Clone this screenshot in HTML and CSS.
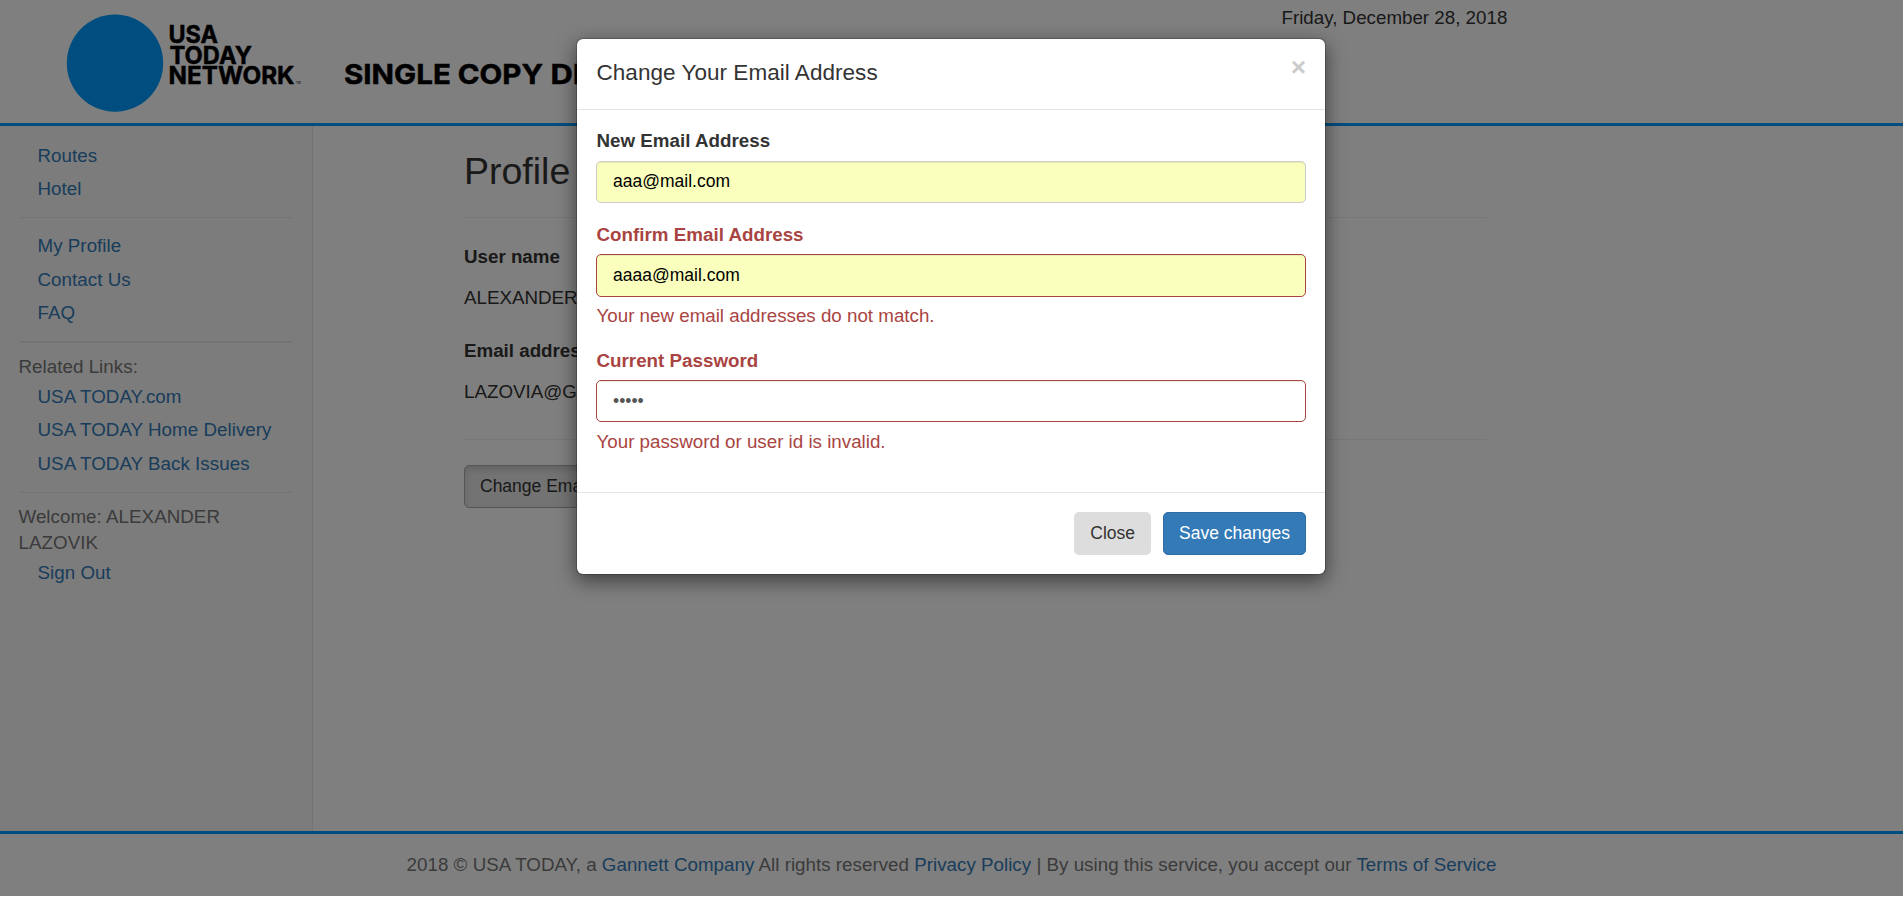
FILE: index.html
```html
<!DOCTYPE html>
<html lang="en">
<head>
<meta charset="utf-8">
<title>Profile</title>
<link rel="stylesheet" href="styles.css">
</head>
<body>
<div class="page">
  <header class="header">
    <svg class="logo" width="800" height="123" viewBox="0 0 800 123" role="img" aria-label="USA TODAY NETWORK">
      <ellipse cx="115" cy="63.2" rx="48.2" ry="48.6" fill="#009bff"/>
      <g class="logo-text">
        <text x="168.500" y="42.500" font-size="24" textLength="49.500" lengthAdjust="spacingAndGlyphs">USA</text>
        <text x="169.500" y="63.500" font-size="24" textLength="82.500" lengthAdjust="spacingAndGlyphs">TODAY</text>
        <text x="168.500" y="84" font-size="24" textLength="126" lengthAdjust="spacingAndGlyphs">NETWORK</text>
        <text class="mark" x="296" y="83.500" font-size="3">TM</text>
        <text x="344" y="83.500" font-size="27.500" textLength="199" lengthAdjust="spacingAndGlyphs">SINGLE COPY</text>
        <text x="550.500" y="83.500" font-size="27.500" textLength="220" lengthAdjust="spacingAndGlyphs">DISTRIBUTION</text>
      </g>
    </svg>
    <div class="date">Friday, December 28, 2018</div>
  </header>
  <div class="columns">
    <nav class="sidebar">
      <ul class="links links-top"><li><a>Routes</a></li><li><a>Hotel</a></li></ul>
      <hr class="rule">
      <ul class="links"><li><a>My Profile</a></li><li><a>Contact Us</a></li><li><a>FAQ</a></li></ul>
      <hr class="rule rule-thick">
      <p class="note">Related Links:</p>
      <ul class="links"><li><a>USA TODAY.com</a></li><li><a>USA TODAY Home Delivery</a></li><li><a>USA TODAY Back Issues</a></li></ul>
      <hr class="rule rule-last">
      <p class="note">Welcome: ALEXANDER LAZOVIK</p>
      <ul class="links"><li><a>Sign Out</a></li></ul>
    </nav>
    <main class="main">
      <h2 class="title">Profile</h2>
      <hr class="rule">
      <dl class="details">
        <dt>User name</dt><dd>ALEXANDER LAZOVIK</dd>
        <dt>Email address</dt><dd>LAZOVIA@GMAIL.COM</dd>
      </dl>
      <hr class="rule">
      <button class="btn btn-active">Change Email Address</button>
    </main>
  </div>
  <footer class="footer">2018 © USA TODAY, a <a>Gannett Company</a> All rights reserved <a>Privacy Policy</a> | By using this service, you accept our <a>Terms of Service</a></footer>
</div>
<div class="backdrop"></div>
<div class="modal" role="dialog">
  <div class="modal-header"><h4 class="modal-title">Change Your Email Address</h4><span class="close">×</span></div>
  <div class="modal-body">
    <div class="group">
      <label class="label">New Email Address</label>
      <input class="input filled" type="text" value="aaa@mail.com">
    </div>
    <div class="group error">
      <label class="label label-tight">Confirm Email Address</label>
      <input class="input input-tall filled" type="text" value="aaaa@mail.com">
      <p class="message">Your new email addresses do not match.</p>
    </div>
    <div class="group error">
      <label class="label label-tight">Current Password</label>
      <input class="input input-password" type="password" value="aaaaa">
      <p class="message message-last">Your password or user id is invalid.</p>
    </div>
  </div>
  <div class="modal-footer"><button class="btn btn-close">Close</button><button class="btn btn-primary">Save changes</button></div>
</div>
</body>
</html>
```
FILE: styles.css
```css
* { box-sizing: border-box; }
html, body { height: 100%; }
body {
  margin: 0;
  overflow: hidden;
  background: #fff;
  color: #333;
  font: 18.75px/26px "Liberation Sans", Arial, sans-serif;
}
a { color: #337ab7; }
p, ul, dl, dd, h2, h4 { margin: 0; padding: 0; }
ul { list-style: none; }

.page { height: 896px; display: flex; flex-direction: column; }
.header {
  height: 126px;
  display: flex;
  border-bottom: 3px solid #009bff;
}
.logo { flex: none; display: block; }
.logo-text { font-family: Inter, sans-serif; font-weight: 700; fill: #000; stroke: #000; stroke-width: .5; }
.mark { stroke: none; opacity: .6; }
.date { margin-left: 481.5px; padding-top: 5px; white-space: nowrap; }

.columns { flex: 1; display: flex; }
.sidebar {
  width: 313px;
  padding: 13px 19px 0 18.5px;
  background: #f8f8f8;
  border-right: 1px solid #e7e7e7;
}
.links { padding-left: 19px; letter-spacing: .04px; }
.links li { height: 33.5px; padding-top: 4px; }
.links-top li { height: 33px; }
.rule { margin: 0; border: 0; height: 1px; background: #eee; }
.sidebar .rule { background: #e9e9e9; margin: 11px 0; }
.sidebar .links-top + .rule { margin-top: 12px; }
.sidebar .rule-thick { height: 2px; margin-top: 11px; }
.sidebar .rule-last { margin-top: 11.5px; }
.note { color: #777; letter-spacing: .04px; }

.main { width: 1023px; margin-left: 151px; }
.title { padding-top: 25px; height: 91px; font-size: 37.5px; line-height: 41px; font-weight: normal; }
.details { height: 221px; padding-top: 26px; }
.details dt { font-weight: bold; height: 41px; }
.details dd { height: 53px; }
.btn {
  height: 43px;
  padding: 0 15px;
  border: 1px solid transparent;
  border-radius: 5px;
  font: 17.5px/25px "Liberation Sans", Arial, sans-serif;
  color: #333;
}
.btn-active {
  margin-top: 25px;
  background: #e6e6e6;
  border-color: #adadad;
  box-shadow: inset 0 4px 6px rgba(0, 0, 0, .125);
}

.footer {
  height: 65px;
  padding-top: 18px;
  border-top: 3px solid #009bff;
  color: #777;
  text-align: center;
  letter-spacing: .02px;
}

.backdrop { position: absolute; top: 0; left: 0; width: 100%; height: 896px; background: rgba(0, 0, 0, .5); }

.modal {
  position: absolute;
  top: 38px;
  left: 576px;
  width: 750px;
  height: 537px;
  background: #fff;
  background-clip: padding-box;
  border: 1px solid rgba(0, 0, 0, .2);
  border-radius: 7px;
  box-shadow: 0 6px 19px rgba(0, 0, 0, .5);
}
.modal-header {
  display: flex;
  justify-content: space-between;
  height: 71px;
  padding: 18px 19px 19px 19.5px;
  border-bottom: 1px solid #e5e5e5;
}
.modal-title { font-size: 22.5px; line-height: 31px; font-weight: normal; letter-spacing: .04px; }
.close { font-size: 26.25px; line-height: 26px; font-weight: bold; color: #ccc; margin-top: -3px; }
.modal-body { height: 382px; padding: 18px 19px; }
.group { margin-bottom: 19px; }
.label { display: block; height: 33px; padding-left: .5px; font-weight: bold; letter-spacing: .02px; }
.label-tight { height: 32px; }
.input {
  display: block;
  width: 100%;
  height: 42px;
  padding: 0 16px 1px;
  border: 1px solid #ccc;
  border-radius: 5px;
  background: #fff;
  box-shadow: inset 0 1px 1px rgba(0, 0, 0, .075);
  color: #555;
  font: 17.5px/25px "Liberation Sans", Arial, sans-serif;
}
.input-tall { height: 43px; }
.input-password { padding: 1px 16px 0; }
.filled { background: #faffbd; color: #000; }
.error .label, .message { color: #a94442; }
.error .input { border-color: #a94442; }
.message { padding: 6px 0 0 .5px; }
.message-last { padding-top: 7px; }
.modal-footer {
  display: flex;
  justify-content: flex-end;
  gap: 12px;
  padding: 19px;
  border-top: 1px solid #e5e5e5;
}
.btn-close { background: #ddd; }
.btn-primary { background: #337ab7; border-color: #2e6da4; color: #fff; }
```
